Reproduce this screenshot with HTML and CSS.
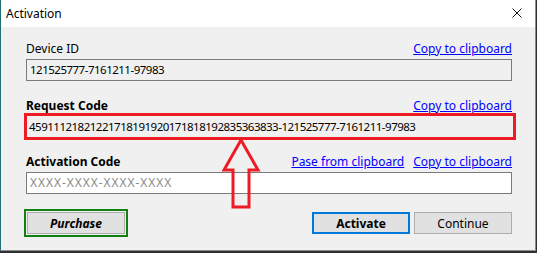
FILE: index.html
```html
<!DOCTYPE html>
<html lang="en">
<head>
  <meta charset="UTF-8" />
  <title>Activation</title>
  <link rel="stylesheet" href="styles.css">
</head>
<body>
  <div class="window">
    <div class="titlebar">
      <span class="title">Activation</span>
      <svg class="close" width="10" height="10" viewBox="0 0 10 10">
        <path d="M0.5 0.5 L9.5 9.5 M9.5 0.5 L0.5 9.5" stroke="#111" stroke-width="1" fill="none" />
      </svg>
    </div>

    <div class="content">
      <div class="label-row first">
        <span class="label">Device ID</span>
        <span class="links"><a href="#">Copy to clipboard</a></span>
      </div>
      <div class="field readonly">121525777-7161211-97983</div>

      <div class="label-row second">
        <span class="label bold">Request Code</span>
        <span class="links"><a href="#">Copy to clipboard</a></span>
      </div>
      <div class="field highlight">45911121821221718191920171818192835363833-121525777-7161211-97983</div>

      <div class="label-row third">
        <span class="label bold">Activation Code</span>
        <span class="links"><a href="#">Pase from clipboard</a><a href="#">Copy to clipboard</a></span>
      </div>
      <div class="field input"><span class="placeholder">XXXX-XXXX-XXXX-XXXX</span></div>

      <div class="buttons">
        <button class="btn purchase">Purchase</button>
        <div class="right-buttons">
          <button class="btn primary">Activate</button>
          <button class="btn">Continue</button>
        </div>
      </div>
    </div>

    <!-- annotation arrow -->
    <svg class="arrow" width="40" height="72" viewBox="0 0 40 72">
      <polygon points="19,2 36,32 27,32 27,69 11,69 11,32 2,32"
               fill="none" stroke="#ed1c24" stroke-width="3" stroke-linejoin="miter" />
    </svg>
  </div>
</body>
</html>
```

FILE: styles.css
```css
* {
  box-sizing: border-box;
  margin: 0;
  padding: 0;
}

body {
  background: #2e3033;
  width: 537px;
  height: 253px;
  overflow: hidden;
  font-family: 'Noto Sans', sans-serif;
  font-size: 12px;
  color: #000;
}

.window {
  position: relative;
  width: 536px;
  height: 251px;
  background: #f0f0f0;
  border-left: 1px solid #1f6f74;
  border-right: 1px solid #8c8c8c;
  border-bottom: 1px solid #8c8c8c;
}

.titlebar {
  height: 27px;
  background: #fff;
  display: flex;
  align-items: center;
  justify-content: space-between;
  padding: 0 13px 0 5px;
}

.close {
  display: block;
  margin-top: -1px;
}

.content {
  padding: 13px 23px 0 25px;
}

.label-row {
  display: flex;
  justify-content: space-between;
  align-items: center;
  height: 16px;
  margin-bottom: 3px;
}

.label-row.second {
  margin-top: 16px;
}

.label-row.third {
  margin-top: 13px;
}

.label.bold {
  font-weight: bold;
}

.links {
  display: flex;
  gap: 9px;
}

.links a {
  color: #0000ff;
  text-decoration: underline;
}

.field {
  height: 22px;
  line-height: 20px;
  padding-left: 3px;
  border: 1px solid #7a7a7a;
  white-space: nowrap;
  overflow: hidden;
  font-size: 11.5px;
  letter-spacing: -0.5px;
}

.field.readonly {
  background: #f0f0f0;
}

.field.highlight {
  height: 27px;
  line-height: 21px;
  margin: -3px -4px 0 -2px;
  padding-left: 2px;
  border: 3px solid #ed1c24;
  background: #f0f0f0;
}

.field.input {
  background: #fff;
}

.placeholder {
  font-size: 12px;
  letter-spacing: 0.95px;
  color: #8a8a8a;
}

.buttons {
  display: flex;
  justify-content: space-between;
  align-items: center;
  margin-top: 15px;
  margin-left: -2px;
}

.right-buttons {
  display: flex;
  gap: 4px;
}

.btn {
  font-family: inherit;
  font-size: 12px;
  height: 22px;
  width: 98px;
  background: #e1e1e1;
  border: 1px solid #adadad;
  color: #000;
}

.btn.primary {
  font-weight: bold;
  border: 2px solid #0078d7;
}

.btn.purchase {
  width: 104px;
  height: 28px;
  font-weight: bold;
  font-style: italic;
  border: 2px solid #108010;
  box-shadow: inset 0 0 0 1px #f0f0f0, inset 0 0 0 2px #adadad;
}

.arrow {
  position: absolute;
  left: 221px;
  top: 138px;
}
```
